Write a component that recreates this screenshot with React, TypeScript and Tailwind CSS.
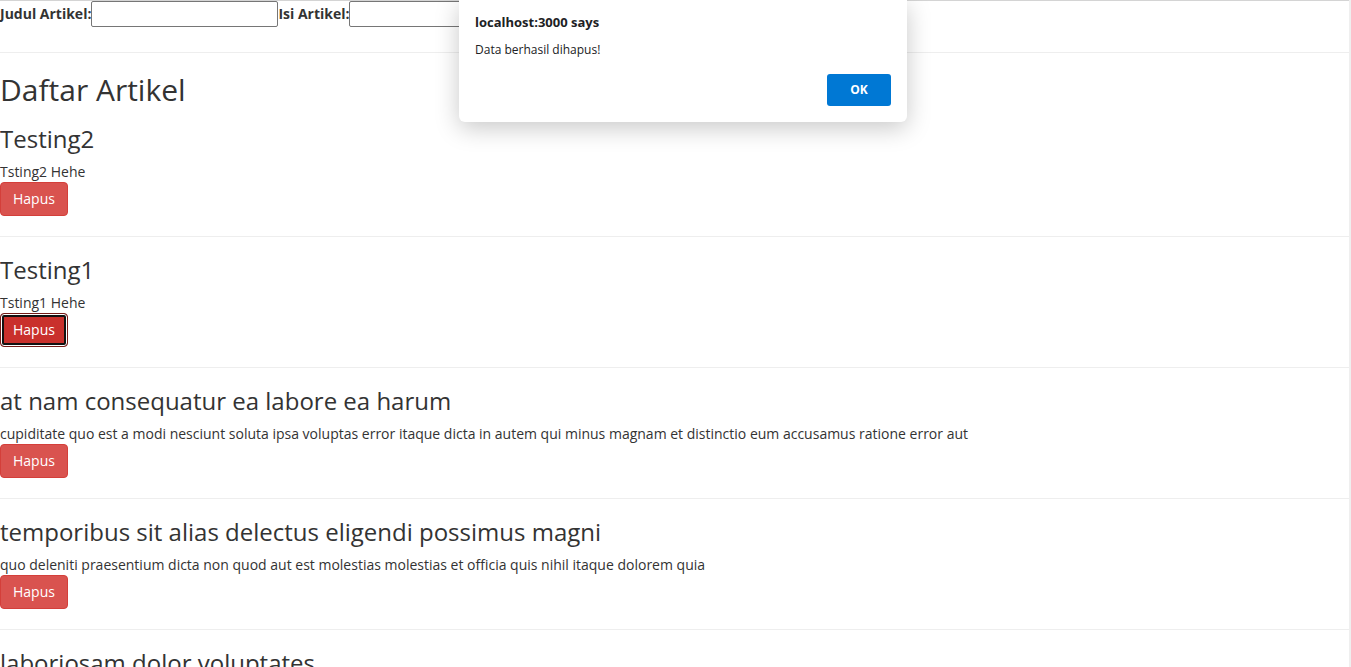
import React from "react";

type Artikel = { judul: string; isi: string };

const artikel: Artikel[] = [
  { judul: "Testing2", isi: "Tsting2 Hehe" },
  { judul: "Testing1", isi: "Tsting1 Hehe" },
  {
    judul: "at nam consequatur ea labore ea harum",
    isi: "cupiditate quo est a modi nesciunt soluta ipsa voluptas error itaque dicta in autem qui minus magnam et distinctio eum accusamus ratione error aut",
  },
  {
    judul: "temporibus sit alias delectus eligendi possimus magni",
    isi: "quo deleniti praesentium dicta non quod aut est molestias molestias et officia quis nihil itaque dolorem quia",
  },
  {
    judul: "laboriosam dolor voluptates",
    isi: "repellat aliquid praesentium dolorem quo sed totam minus non itaque nihil labore molestiae sunt dolor eveniet hic recusandae veniam tempora et tenetur expedita sunt",
  },
];

export default function App() {
  return (
    <div className="relative flex h-screen overflow-hidden bg-white font-['Open_Sans',sans-serif] text-[14px] leading-[20px] text-[#333]">
      {/* ── Page content ───────────────────────────── */}
      <div className="min-w-0 flex-1 border-t border-[#d4d4d4]">
        <form className="flex h-[26px] items-center" onSubmit={(e) => e.preventDefault()}>
          <label className="font-bold">Judul Artikel:</label>
          <input className="h-[26px] w-[187px] rounded-[2px] border border-[#767676] bg-white" />
          <label className="font-bold">Isi Artikel:</label>
          <input className="h-[26px] w-[187px] rounded-[2px] border border-[#767676] bg-white" />
        </form>
        <hr className="mt-[25px] mb-5 border-0 border-t border-[#eee]" />

        <h1 className="mt-5 mb-[10px] text-[30px] leading-[33px] font-normal">Daftar Artikel</h1>

        {artikel.map((a, i) => (
          <div key={a.judul}>
            <h2 className="mt-5 mb-[10px] text-[24px] leading-[26px] font-normal">{a.judul}</h2>
            <div className="whitespace-nowrap">{a.isi}</div>
            {i === 1 ? (
              <button className="h-[34px] rounded-[4px] border border-[#761c19] bg-[#c9302c] px-3 text-white shadow-[inset_0_0_0_1px_#fff,inset_0_0_0_3px_#111]">
                Hapus
              </button>
            ) : (
              <button className="h-[34px] rounded-[4px] border border-[#d43f3a] bg-[#d9534f] px-3 text-white">
                Hapus
              </button>
            )}
            <hr className="my-5 border-0 border-t border-[#eee]" />
          </div>
        ))}
      </div>

      {/* scrollbar edge */}
      <div className="h-full w-[2px] bg-[#efefef]" />

      {/* ── Browser alert ──────────────────────────── */}
      <div className="absolute top-0 left-[459px] flex h-[122px] w-[448px] flex-col rounded-b-[6px] bg-white px-4 pt-[12px] shadow-[0_6px_24px_rgba(0,0,0,0.22)]">
        <p className="text-[13px] leading-[20px] font-bold text-[#202124]">localhost:3000 says</p>
        <p className="mt-[9px] text-[12px] leading-[18px] text-[#202124]">Data berhasil dihapus!</p>
        <div className="mt-[15px] flex justify-end">
          <button className="h-[32px] w-[64px] rounded-[3px] bg-[#0078d4] text-[12px] font-bold text-white">
            OK
          </button>
        </div>
      </div>
    </div>
  );
}
